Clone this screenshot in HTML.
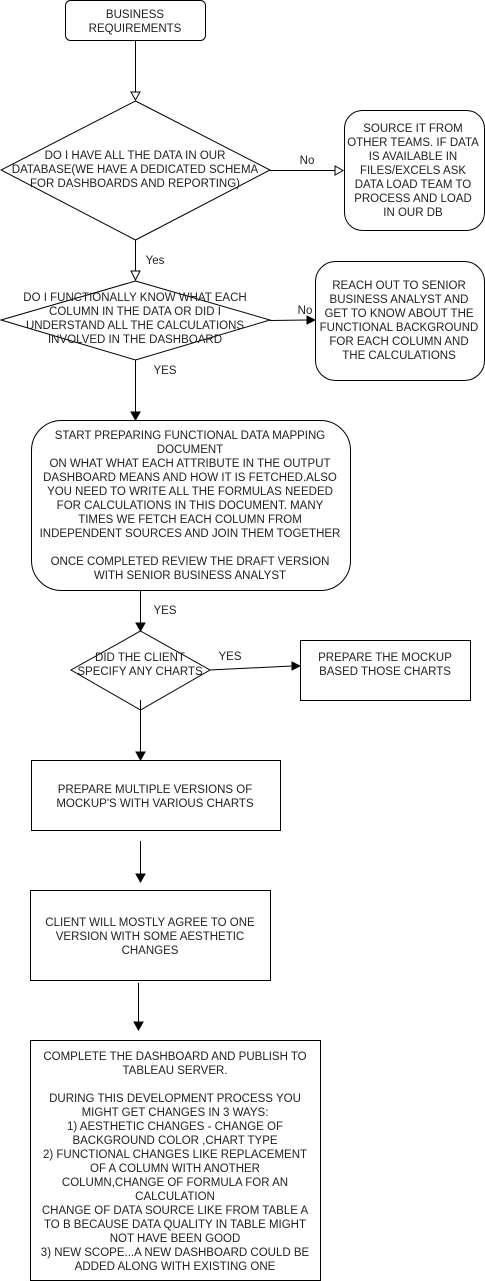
<!DOCTYPE html>
<html><head><meta charset="utf-8"><style>
html,body{margin:0;padding:0;background:#fff;}
svg{display:block;}
text{font-family:"Liberation Sans",sans-serif;font-size:11.5px;fill:#222;text-anchor:middle;}
</style></head><body>
<svg width="485" height="1281" viewBox="0 0 485 1281" xmlns="http://www.w3.org/2000/svg">
<g fill="none" stroke="#000" stroke-width="1">
<rect x="65.5" y="0.5" width="140" height="40" rx="5"/>
<line x1="135.5" y1="40" x2="135.5" y2="92"/>
<path d="M131 92 L140 92 L135.5 100 Z" fill="#fff"/>
<path d="M135.5 101 L270 170 L135.5 240 L1 170 Z"/>
<line x1="270" y1="170.5" x2="335" y2="170.5"/>
<path d="M335 166 L335 175 L343 170.5 Z" fill="#fff"/>
<rect x="344.5" y="110.5" width="140" height="120" rx="18"/>
<line x1="135.5" y1="240" x2="135.5" y2="271"/>
<path d="M131 271 L140 271 L135.5 280 Z" fill="#fff"/>
<path d="M135.5 281 L270 320 L135.5 360 L1 320 Z"/>
<line x1="270" y1="320.5" x2="307" y2="320"/>
<path d="M307 316 L307 324 L315 320 Z" fill="#000"/>
<rect x="315.5" y="261.5" width="169" height="119" rx="20"/>
<line x1="135.5" y1="360" x2="135.5" y2="413"/>
<path d="M131 412 L140 412 L135.5 420 Z" fill="#000"/>
<rect x="31.5" y="420.5" width="319" height="170" rx="30"/>
<line x1="140.5" y1="590" x2="140.5" y2="624"/>
<path d="M136 623 L145 623 L140.5 631 Z" fill="#000"/>
<path d="M140.5 631 L210 670 L140.5 710 L71 670 Z"/>
<line x1="210" y1="670" x2="292" y2="666"/>
<path d="M292 662 L292 670 L300 666 Z" fill="#000"/>
<rect x="300.5" y="640.5" width="170" height="60"/>
<line x1="140.5" y1="700" x2="140.5" y2="753"/>
<path d="M136 752 L145 752 L140.5 760 Z" fill="#000"/>
<rect x="31.5" y="760.5" width="249" height="70"/>
<line x1="140.5" y1="841" x2="140.5" y2="875"/>
<path d="M136 874 L145 874 L140.5 882 Z" fill="#000"/>
<rect x="30.5" y="890.5" width="240" height="90"/>
<line x1="138.5" y1="983" x2="138.5" y2="1023"/>
<path d="M134 1022 L143 1022 L138.5 1030 Z" fill="#000"/>
<rect x="30.5" y="1040.5" width="290" height="240"/>
</g>
<text x="135" y="18">BUSINESS</text>
<text x="135" y="32">REQUIREMENTS</text>
<text x="135" y="159">DO I HAVE ALL THE DATA IN OUR</text>
<text x="135" y="173">DATABASE(WE HAVE A DEDICATED SCHEMA</text>
<text x="135" y="187">FOR DASHBOARDS AND REPORTING)</text>
<text x="307" y="164">No</text>
<text x="413" y="132">SOURCE IT FROM</text>
<text x="413" y="146">OTHER TEAMS. IF DATA</text>
<text x="413" y="160">IS AVAILABLE IN</text>
<text x="413" y="174">FILES/EXCELS ASK</text>
<text x="413" y="188">DATA LOAD TEAM TO</text>
<text x="413" y="202">PROCESS AND LOAD</text>
<text x="413" y="216">IN OUR DB</text>
<text x="155" y="264">Yes</text>
<text x="135" y="301">DO I FUNCTIONALLY KNOW WHAT EACH</text>
<text x="135" y="315">COLUMN IN THE DATA OR DID I</text>
<text x="135" y="329">UNDERSTAND ALL THE CALCULATIONS</text>
<text x="135" y="343">INVOLVED IN THE DASHBOARD</text>
<text x="305" y="314">No</text>
<text x="399" y="289">REACH OUT TO SENIOR</text>
<text x="399" y="303">BUSINESS ANALYST AND</text>
<text x="399" y="317">GET TO KNOW ABOUT THE</text>
<text x="399" y="331">FUNCTIONAL BACKGROUND</text>
<text x="399" y="345">FOR EACH COLUMN AND</text>
<text x="399" y="359">THE CALCULATIONS</text>
<text x="165" y="374">YES</text>
<text x="190" y="439">START PREPARING FUNCTIONAL DATA MAPPING</text>
<text x="190" y="453">DOCUMENT</text>
<text x="190" y="467">ON WHAT WHAT EACH ATTRIBUTE IN THE OUTPUT</text>
<text x="190" y="481">DASHBOARD MEANS AND HOW IT IS FETCHED.ALSO</text>
<text x="190" y="495">YOU NEED TO WRITE ALL THE FORMULAS NEEDED</text>
<text x="190" y="509">FOR CALCULATIONS IN THIS DOCUMENT. MANY</text>
<text x="190" y="523">TIMES WE FETCH EACH COLUMN FROM</text>
<text x="190" y="537">INDEPENDENT SOURCES AND JOIN THEM TOGETHER</text>
<text x="190" y="565">ONCE COMPLETED REVIEW THE DRAFT VERSION</text>
<text x="190" y="579">WITH SENIOR BUSINESS ANALYST</text>
<text x="165" y="614">YES</text>
<text x="140" y="661">DID THE CLIENT</text>
<text x="140" y="675">SPECIFY ANY CHARTS</text>
<text x="230" y="660">YES</text>
<text x="385" y="661">PREPARE THE MOCKUP</text>
<text x="385" y="675">BASED THOSE CHARTS</text>
<text x="155" y="793">PREPARE MULTIPLE VERSIONS OF</text>
<text x="155" y="807">MOCKUP'S WITH VARIOUS CHARTS</text>
<text x="150" y="926">CLIENT WILL MOSTLY AGREE TO ONE</text>
<text x="150" y="940">VERSION WITH SOME AESTHETIC</text>
<text x="150" y="954">CHANGES</text>
<text x="175" y="1060">COMPLETE THE DASHBOARD AND PUBLISH TO</text>
<text x="175" y="1074">TABLEAU SERVER.</text>
<text x="175" y="1102">DURING THIS DEVELOPMENT PROCESS YOU</text>
<text x="175" y="1116">MIGHT GET CHANGES IN 3 WAYS:</text>
<text x="175" y="1130">1) AESTHETIC CHANGES - CHANGE OF</text>
<text x="175" y="1144">BACKGROUND COLOR ,CHART TYPE</text>
<text x="175" y="1158">2) FUNCTIONAL CHANGES LIKE REPLACEMENT</text>
<text x="175" y="1172">OF A COLUMN WITH ANOTHER</text>
<text x="175" y="1186">COLUMN,CHANGE OF FORMULA FOR AN</text>
<text x="175" y="1200">CALCULATION</text>
<text x="175" y="1214">CHANGE OF DATA SOURCE LIKE FROM TABLE A</text>
<text x="175" y="1228">TO B BECAUSE DATA QUALITY IN TABLE MIGHT</text>
<text x="175" y="1242">NOT HAVE BEEN GOOD</text>
<text x="175" y="1256">3) NEW SCOPE...A NEW DASHBOARD COULD BE</text>
<text x="175" y="1270">ADDED ALONG WITH EXISTING ONE</text>
</svg>
</body></html>
